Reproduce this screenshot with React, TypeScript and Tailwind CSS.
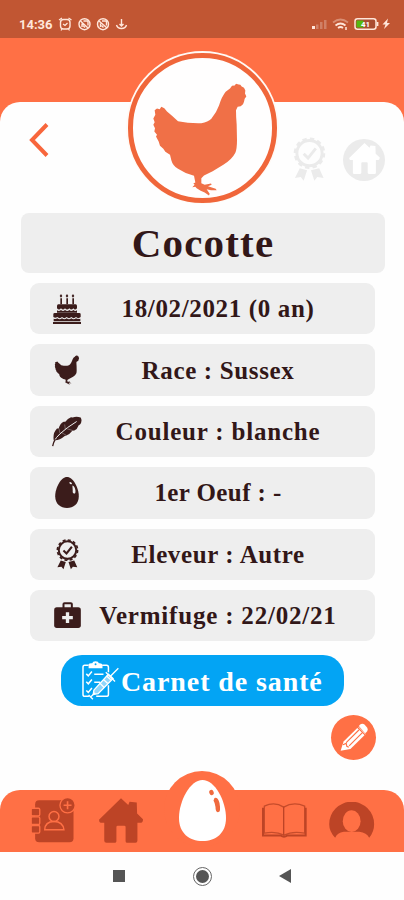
import type { ReactNode } from 'react'

type IconProps = { className?: string }

function HenIcon({ className }: IconProps) {
  return (
    <svg viewBox="126 126 288 344" className={className} fill="currentColor">
      <path d="M360 145L366 137L374 136L378 131L386 133L391 134L395 139L402 143L406 151L405 160L409 169L404 176L402 185L399 192L392 198L383 200L378 210Q378 230 380 252L381 300Q381 325 376 338Q366 358 340 374L308 393L282 406L274 414L274 429L284 434L303 430L305 434L294 438L317 446L320 450L303 450L290 447L299 461L297 466L284 457L272 452L260 444L256 440L247 441L254 434L250 430L256 427L252 407Q228 402 204 386Q188 376 184 360L180 344L166 335L160 326L150 317L146 304L138 289L141 284L133 274L135 264L130 254L134 246L130 235L136 224L134 210L141 205L149 207L154 200L163 204L171 214L186 227L204 243Q236 250 274 249Q294 246 304 236Q320 216 327 196Q335 170 347 155Z" />
    </svg>
  )
}

function CakeIcon({ className }: IconProps) {
  return (
    <svg viewBox="0 0 84 90" className={className} fill="currentColor">
      <path d="M24 0l4 6-4 5-4-5zM42 0l4 6-4 5-4-5zM60 0l4 6-4 5-4-5z" />
      <path d="M22 13h5v18h-5zM40 13h5v18h-5zM58 13h5v18h-5z" />
      <path d="M16 31h52q4 0 4 5v7q-6 7-11 0q-6 7-12 0q-7 7-13 0q-6 7-12 0q-6 7-12 0v-7q0-5 4-5z" />
      <path d="M12 49q6 4 12-1q6 6 12 0q7 6 13 0q6 6 12 0q6 5 11 1v7H12z" />
      <path d="M5 57h74q4 0 4 4v8q-7 7-14 0q-7 7-14 0q-7 7-14 0q-7 7-14 0q-7 7-14 0q-6 5-12 0v-8q0-4 4-4z" />
      <path d="M2 74q6 3 11-1q7 6 14 0q7 6 14 0q7 6 14 0q7 6 14 0q5 4 13 1v8H2zM0 84h84v6H0z" />
    </svg>
  )
}

function FeatherIcon({ className }: IconProps) {
  return (
    <svg viewBox="0 0 90 92" className={className}>
      <path
        d="M5 72Q2 50 15 37L20 37Q24 22 35 17L40 17Q47 6 57 3L62 4Q73-1 86 4Q92 14 84 25L80 27Q76 39 67 43L61 44Q52 56 43 58L37 60Q24 72 9 72Z"
        fill="currentColor"
      />
      <path
        d="M7 74Q12 64 24 53Q44 34 74 16"
        fill="none"
        stroke="#eee"
        strokeWidth="3"
      />
      <path
        d="M2 90Q4 79 10 69"
        fill="none"
        stroke="currentColor"
        strokeWidth="4"
      />
      <path
        d="M24 52l-3-15M40 39l-2-14M42 37l20 6M28 49l14 8"
        fill="none"
        stroke="#eee"
        strokeWidth="1"
      />
    </svg>
  )
}

function EggIcon({ className }: IconProps) {
  return (
    <svg viewBox="0 0 70 92" className={className}>
      <path
        d="M35 0C53 0 70 32 70 57C70 80 54 92 35 92S0 80 0 57C0 32 17 0 35 0Z"
        fill="currentColor"
      />
      <path
        d="M43 15q5-1 7 5q-4 4-8-2zM51 25q7 2 9 14q1 11-4 10q-5 0-4-9z"
        fill="#eee"
      />
    </svg>
  )
}

function MedalIcon({ className }: IconProps) {
  return (
    <svg viewBox="0 0 68 92" className={className} fill="none">
      <circle cx="34" cy="33" r="26" stroke="currentColor" strokeWidth="6" />
      <circle
        cx="34"
        cy="33"
        r="30"
        stroke="currentColor"
        strokeWidth="5"
        strokeDasharray="9 6.7"
      />
      <path
        d="M22 34l9 9L47 23"
        stroke="currentColor"
        strokeWidth="6"
      />
      <path
        d="M14 64L29 68L22 90L16 82L4 84ZM54 64L37 68L44 90L50 82L63 84Z"
        fill="currentColor"
      />
    </svg>
  )
}

function KitIcon({ className }: IconProps) {
  return (
    <svg viewBox="0 0 80 78" className={className}>
      <path
        d="M28 18V6q0-2 3-2h19q3 0 3 2v12"
        fill="none"
        stroke="currentColor"
        strokeWidth="6"
      />
      <rect y="16" width="80" height="62" rx="8" fill="currentColor" />
      <path d="M35 31h10v11h11v10H45v11H35V52H24V42h11z" fill="#eee" />
    </svg>
  )
}

function HouseIcon({ className }: IconProps) {
  return (
    <svg viewBox="296 98 134 136" className={className} fill="currentColor">
      <path d="M363 98L385 119L389 109L411 111L412 145L430 162Q430 172 424 173H413V228Q413 234 407 234H382Q377 234 377 229V186Q377 182 373 182H353Q349 182 349 186V229Q349 234 344 234H319Q312 234 312 228V173H301Q296 172 296 164Z" />
    </svg>
  )
}

function ContactsIcon({ className }: IconProps) {
  return (
    <svg viewBox="94 98 132 136" className={className}>
      <rect x="106" y="105" width="116" height="127" rx="12" fill="#bd4426" />
      <g fill="#bd4426" stroke="#ff7045" strokeWidth="4">
        <rect x="94" y="129" width="26" height="23" rx="4" />
        <rect x="94" y="155" width="26" height="23" rx="4" />
        <rect x="94" y="181" width="26" height="23" rx="4" />
        <circle cx="204" cy="120" r="23" />
      </g>
      <path d="M204 108v24M192 120h24" stroke="#ff7045" strokeWidth="5" />
      <g fill="none" stroke="#ff7045" strokeWidth="4.500">
        <circle cx="163" cy="154" r="15" />
        <path d="M135 194Q136 169 163 169T193 194Z" />
      </g>
    </svg>
  )
}

function BookIcon({ className }: IconProps) {
  return (
    <svg viewBox="178 114 138 104" className={className} fill="none">
      <path
        d="M188 123Q219 108 246 126Q276 108 309 123V204Q272 197 247 210Q222 197 188 204Z"
        stroke="#c64c2b"
        strokeWidth="4"
      />
      <path d="M246 125V210" stroke="#bd4426" strokeWidth="4" />
      <path
        d="M184 128V211H237Q247 218 257 211H312V128"
        stroke="#bd4426"
        strokeWidth="6"
      />
    </svg>
  )
}

function ProfileIcon({ className }: IconProps) {
  return (
    <svg viewBox="382 110 138 112" className={className}>
      <path
        d="M400 218Q382 199 382 177A68 68 0 0 1 518 177Q518 200 503 218Q496 203 473 200H426Q406 203 400 218Z"
        fill="#bd4426"
      />
      <ellipse cx="450" cy="168" rx="27" ry="33" fill="#ff7045" />
      <path d="M426 201Q450 207 474 201L477 222H424Z" fill="#ff7045" />
    </svg>
  )
}

function ClipboardIcon({ className }: IconProps) {
  return (
    <svg viewBox="96 48 112 118" className={className} fill="none">
      <g stroke="white" strokeWidth="4.500">
        <path d="M116 61H104Q99 61 99 67V149Q99 155 105 155H117M157 61H170Q176 61 176 67V82M176 121V149Q176 155 169 155H139" />
        <path d="M109 87l6 6 11-13M109 111l6 6 11-13M109 137l6 6 11-13M133 88h28M133 112h18" />
      </g>
      <path
        d="M116 58Q118 54 127 55Q128 49 137 49T147 55Q157 54 158 60V70H116Z"
        fill="white"
      />
      <circle cx="137" cy="58" r="3" fill="#03a4f4" />
      <path
        d="M132 136L176 88L190 101L145 147L130 149Z"
        fill="#8fd6fa"
        stroke="white"
        strokeWidth="4"
      />
      <path
        d="M150 115l13 13M161 104l13 12M170 93l13 12M182 94L206 70M121 158L136 144M168 82L196 110M116 151l13 13"
        stroke="white"
        strokeWidth="4"
      />
    </svg>
  )
}

function PencilIcon({ className }: IconProps) {
  return (
    <svg viewBox="118 65 86 88" className={className}>
      <path
        d="M120 150L129 121L175 76L197 98L150 144Z"
        fill="white"
      />
      <path
        d="M176 74L180 69Q187 64 194 70L201 78Q206 86 199 93L195 96Z"
        fill="white"
      />
      <path
        d="M170 76L195 101M137 125L176 86M146 135L186 95M127 131L137 127L139 136L145 139"
        fill="none"
        stroke="#ff7045"
        strokeWidth="3.5"
      />
    </svg>
  )
}

function StatusBar() {
  return (
    <div className="flex h-[38px] items-end bg-[#c15633] pr-[13px] pb-[7px] pl-[19px] text-[#ffe6da]">
      <span className="w-[39px] font-[Roboto] text-[13px] leading-[13px] font-bold">
        14:36
      </span>
      {/* Alarm, silent modes, download */}
      <svg viewBox="0 0 72 14" className="h-[14px] w-[72px]" fill="none" stroke="currentColor">
        <rect x="2.5" y="2.5" width="9.5" height="9.5" rx="3" strokeWidth="1.4" />
        <path d="M1 3L4 1M13.5 3L10.5 1M5 7l2 1.5L9.500 6M4 12l-1 1.5M10.5 12l1 1.5" strokeWidth="1.2" />
        <g strokeWidth="1.4">
          <circle cx="26.5" cy="7.2" r="5.5" />
          <path d="M22.5 4L30 11M24 10V6.5M25.5 4h4.5v4.5M25 8.5l2 2" />
          <circle cx="45" cy="7.2" r="5.5" />
          <path d="M41 4L49 11M42.5 10V6.5M44 4h4.5v4.5M43.5 8.5l2 2" />
          <path d="M63.5 2v7M61.5 7l2 2L65.500 7M58.500 8q1 3.500 5 3.500T68.500 8" />
        </g>
      </svg>
      <svg viewBox="0 0 80 14" className="ml-auto h-[14px] w-[80px]" fill="none">
        <path d="M1 12V9h3v3z" fill="#ffe6da" />
        <path d="M5 12V7.5h2.5V12zM9 12V5h2.5v7zM13 12V3h2.5v9z" fill="#d08066" />
        <path d="M22 5.500q7.500-6 15 0" stroke="#d98e74" strokeWidth="1.7" />
        <path d="M24.500 8.500q5-4 10 0M27 11q2.500-2 5 0" stroke="#ffe6da" strokeWidth="1.7" />
        <path d="M35 10v3" stroke="#ffe6da" strokeWidth="1.5" />
        <rect x="44" y="1.7" width="21" height="10.5" rx="2.5" fill="#a94c31" stroke="#ffe6da" strokeWidth="1.5" />
        <path d="M45.5 3.5h7v7h-7z" fill="#55b910" />
        <path d="M66.5 5v4" stroke="#ffe6da" strokeWidth="1.8" />
        <text x="54.5" y="10" textAnchor="middle" fill="white" className="font-[Roboto] text-[8px] font-bold">
          41
        </text>
        <path d="M77 1.500L71.500 7.500h3L73 12l6-6h-3z" fill="#ffe6da" />
      </svg>
    </div>
  )
}

type InfoRow = {
  id: string
  label: string
  tracking: string
  icon: ReactNode
}

const rows: InfoRow[] = [
  {
    id: 'birthday',
    label: '18/02/2021 (0 an)',
    tracking: 'tracking-[0.65px]',
    icon: <CakeIcon className="h-[30px] w-[28px]" />,
  },
  {
    id: 'breed',
    label: 'Race : Sussex',
    tracking: 'tracking-[0.65px]',
    icon: <HenIcon className="h-[30px] w-[26px]" />,
  },
  {
    id: 'color',
    label: 'Couleur : blanche',
    tracking: 'tracking-[0.8px]',
    icon: <FeatherIcon className="h-[31px] w-[30px]" />,
  },
  {
    id: 'first-egg',
    label: '1er Oeuf : -',
    tracking: 'tracking-[0.4px]',
    icon: <EggIcon className="h-[31px] w-[24px]" />,
  },
  {
    id: 'breeder',
    label: 'Eleveur : Autre',
    tracking: 'tracking-[0.6px]',
    icon: <MedalIcon className="h-[31px] w-[23px]" />,
  },
  {
    id: 'deworming',
    label: 'Vermifuge : 22/02/21',
    tracking: 'tracking-[0.8px]',
    icon: <KitIcon className="mb-[2px] h-[26px] w-[27px]" />,
  },
]

function Header() {
  return (
    <div className="relative bg-[#ff7045] pt-[64px]">
      <div className="flex h-[111px] items-start justify-between rounded-t-[20px] bg-[#fefefe] pr-[19px] pl-[29px]">
        <svg viewBox="0 0 20 34" className="mt-[21px] h-[34px] w-[20px]" fill="none">
          <path d="M18 1.5L3 17L18 32.5" stroke="#f8663c" strokeWidth="4" />
        </svg>
        <div className="mt-[35px] flex text-[#ebebeb]">
          <MedalIcon className="h-[45px] w-[33px]" />
          <div className="mt-[2px] ml-[17px] flex h-[42px] w-[42px] items-center justify-center rounded-full bg-[#ebebeb]">
            <HouseIcon className="mb-[4px] h-[31px] w-[31px] text-white" />
          </div>
        </div>
      </div>

      {/* Portrait overlapping the header */}
      <div className="absolute top-[13px] left-[126px] flex h-[153px] w-[153px] items-center justify-center rounded-full bg-[#fffaf6]">
        <div className="mt-[1px] flex h-[150px] w-[149px] items-center justify-center rounded-full border-5 border-[#f0663a] bg-[#fffefe]">
          <HenIcon className="mt-[22px] ml-[-5px] h-[115px] w-[96px] text-[#f07047]" />
        </div>
      </div>
    </div>
  )
}

function BottomNav() {
  return (
    <div className="relative h-[62px]">
      <div className="absolute top-[-19px] left-[164px] h-[76px] w-[76px] rounded-full bg-[#ff7045]" />
      <div className="flex h-full items-start rounded-t-[20px] bg-[#ff7045] pl-[31px] text-[#bd4426]">
        <ContactsIcon className="mt-[8px] h-[45px] w-[44px]" />
        <HouseIcon className="mt-[8px] ml-[24px] h-[45px] w-[44px]" />
        <BookIcon className="mt-[13px] ml-[118px] h-[35px] w-[46px]" />
        <ProfileIcon className="mt-[12px] ml-[22px] h-[37px] w-[46px]" />
      </div>
      <svg viewBox="0 0 47 61" className="absolute top-[-10px] left-[179px] h-[61px] w-[47px]">
        <path d="M23.5 0C36 0 47 21 47 38C47 53 37 61 23.5 61S0 53 0 38C0 21 11 0 23.5 0Z" fill="white" />
        <ellipse cx="32.5" cy="12.5" rx="2.2" ry="2.7" fill="#f06a3e" transform="rotate(-20 32.5 12.5)" />
        <path d="M35.5 18Q39 17 40.5 23Q42 32 39.5 32Q36.5 33 36.5 27Q36 23 34.5 20.5Z" fill="#f06a3e" />
      </svg>
    </div>
  )
}

export default function App() {
  return (
    <div className="flex h-[900px] w-[404px] flex-col overflow-hidden bg-[#fefefe] font-['Liberation_Serif',serif] text-[#321718]">
      <StatusBar />
      <Header />

      <h1 className="mr-[19px] ml-[21px] flex h-[60px] items-center justify-center rounded-lg bg-[#eee] pt-[2px] text-[41px] font-bold tracking-[1.2px]">
        Cocotte
      </h1>

      <div className="mt-[10px] mr-[29px] ml-[30px] flex flex-col gap-[10px]">
        {rows.map((row) => (
          <div
            key={row.id}
            className="flex h-[51.4px] items-center rounded-[9px] bg-[#eee] pr-[22px] pl-[21px]"
          >
            <div className="flex w-[32px] justify-center text-[#3b1c1b]">
              {row.icon}
            </div>
            <span
              className={`flex-1 text-center text-[25px] leading-none font-bold whitespace-nowrap ${row.tracking}`}
            >
              {row.label}
            </span>
          </div>
        ))}
      </div>

      <button className="mt-[14px] ml-[61px] flex h-[51px] w-[283px] shrink-0 items-center rounded-[21px] bg-[#03a4f4] pl-[21px] text-white">
        <ClipboardIcon className="h-[39px] w-[37px]" />
        <span className="mt-[2px] ml-[2px] text-[28px] leading-none font-bold tracking-[0.9px] whitespace-nowrap">
          Carnet de santé
        </span>
      </button>

      <button className="mt-[9px] ml-[331px] flex h-[45px] w-[45px] shrink-0 items-center justify-center rounded-full bg-[#ff7045]">
        <PencilIcon className="h-[29px] w-[28px]" />
      </button>

      <div className="mt-auto">
        <BottomNav />
        <div className="flex h-[48px] items-center bg-[#fefefe] pl-[113px]">
          <div className="h-[12px] w-[12px] bg-[#555]" />
          <div className="ml-[68px] flex h-[19px] w-[19px] items-center justify-center rounded-full border border-[#666]">
            <div className="h-[13px] w-[13px] rounded-full bg-[#555]" />
          </div>
          <svg viewBox="0 0 12 14" className="ml-[67px] h-[14px] w-[12px]">
            <path d="M0 7L12 0V14Z" fill="#555" />
          </svg>
        </div>
      </div>
    </div>
  )
}
